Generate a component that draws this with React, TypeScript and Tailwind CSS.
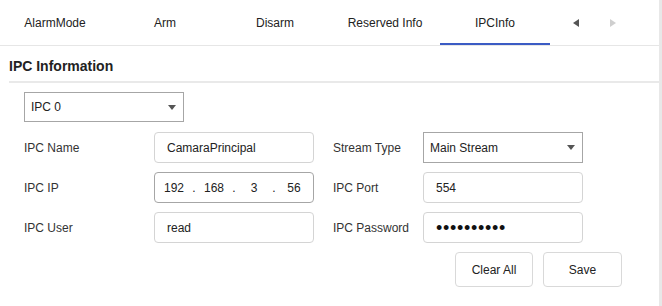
import React from "react";

const tabs = ["AlarmMode", "Arm", "Disarm", "Reserved Info", "IPCInfo"];

function Caret() {
  return (
    <span className="w-0 h-0 border-l-[4px] border-r-[4px] border-t-[5px] border-l-transparent border-r-transparent border-t-[#555]" />
  );
}

function TextBox({ children }: { children: React.ReactNode }) {
  return (
    <div className="h-[31px] w-[160px] border border-[#d4d4d4] rounded-[4px] flex items-center px-[12px] text-[12px] text-[#222]">
      {children}
    </div>
  );
}

function SelectBox({ value }: { value: string }) {
  return (
    <div className="h-[31px] w-[160px] border border-[#a6a6a6] flex items-center justify-between pl-[6px] pr-[7px] text-[12px] text-[#222]">
      <span>{value}</span>
      <Caret />
    </div>
  );
}

export default function App() {
  return (
    <div className="w-[662px] h-[306px] flex bg-white font-['Liberation_Sans',Arial,sans-serif] text-[#333] overflow-hidden">
      <div className="flex-1 flex flex-col">
        <div className="h-[46px] border-b border-[#e6e6e6] flex">
          {tabs.map((t) => (
            <div
              key={t}
              className={
                t === "IPCInfo"
                  ? "w-[110px] h-[45px] flex items-center justify-center text-[12px] text-[#222] border-b-2 border-[#3b5bc4] pt-[2px]"
                  : "w-[110px] h-[45px] flex items-center justify-center text-[12px] text-[#222]"
              }
            >
              {t}
            </div>
          ))}
          <div className="flex items-center pl-[23px] gap-[31px] h-[45px]">
            <span className="w-0 h-0 border-t-[4px] border-b-[4px] border-r-[6px] border-t-transparent border-b-transparent border-r-[#555]" />
            <span className="w-0 h-0 border-t-[4px] border-b-[4px] border-l-[6px] border-t-transparent border-b-transparent border-l-[#cfcfcf]" />
          </div>
        </div>

        <div className="pl-[9px]">
          <div className="pt-[12px] h-[35px] text-[14px] leading-[16px] font-bold text-[#222]">
            IPC Information
          </div>
          <div className="h-[2px] bg-[#e9e9e9]" />

          <div className="pl-[15px]">
            <div className="mt-[9px] h-[30px] w-[160px] border border-[#a6a6a6] flex items-center justify-between pl-[6px] pr-[7px] text-[12px] text-[#222]">
              <span>IPC 0</span>
              <Caret />
            </div>

            <div className="mt-[10px] grid grid-cols-[130px_160px_19px_90px_160px] gap-y-[9px] items-center text-[12px]">
              <span>IPC Name</span>
              <TextBox>CamaraPrincipal</TextBox>
              <span />
              <span>Stream Type</span>
              <SelectBox value="Main Stream" />

              <span>IPC IP</span>
              <div className="h-[31px] w-[160px] border border-[#a6a6a6] rounded-[4px] flex items-center pl-[3px] text-[12px] text-[#222]">
                <span className="w-[32px] text-center">192</span>
                <span className="w-[8px] text-center">.</span>
                <span className="w-[32px] text-center">168</span>
                <span className="w-[8px] text-center">.</span>
                <span className="w-[32px] text-center">3</span>
                <span className="w-[8px] text-center">.</span>
                <span className="w-[32px] text-center">56</span>
              </div>
              <span />
              <span>IPC Port</span>
              <TextBox>554</TextBox>

              <span>IPC User</span>
              <TextBox>read</TextBox>
              <span />
              <span>IPC Password</span>
              <TextBox>
                <span className="text-[18px] tracking-[0.7px] text-[#111] leading-none">••••••••••</span>
              </TextBox>
            </div>

            <div className="mt-[9px] w-[598px] flex justify-end gap-[10px]">
              <div className="w-[78px] h-[35px] border border-[#d9d9d9] rounded-[4px] flex items-center justify-center text-[12px] text-[#222]">
                Clear All
              </div>
              <div className="w-[79px] h-[35px] border border-[#d9d9d9] rounded-[4px] flex items-center justify-center text-[12px] text-[#222]">
                Save
              </div>
            </div>
          </div>
        </div>
      </div>
      <div className="w-[3px] h-full bg-[#e8e8e8]" />
    </div>
  );
}
